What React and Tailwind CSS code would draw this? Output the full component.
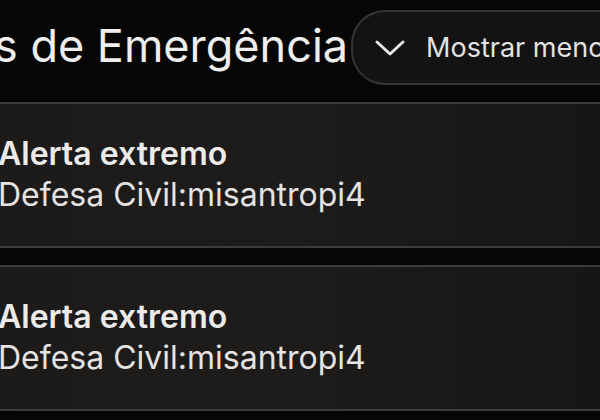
import React from 'react';

const AlertCard = ({ title, sender }) => {
  return (
    <div className="h-[146px] border-y-2 border-[#3e3c3b] bg-gradient-to-r from-[#1c1b1a] via-[#1e1c1b] to-[#171615] pt-[30px]">
      <p className="-ml-[2px] text-[32px] leading-[40px] font-semibold text-[#ecebea]">{title}</p>
      <p className="-ml-[2px] text-[32px] leading-[41px] text-[#e4e3e2]">{sender}</p>
    </div>
  );
};

const App = () => {
  const alerts = [
    { title: 'Alerta extremo', sender: 'Defesa Civil:misantropi4' },
    { title: 'Alerta extremo', sender: 'Defesa Civil:misantropi4' },
  ];

  return (
    <div className="w-[600px] h-[420px] overflow-hidden bg-[#060606] font-['Inter',sans-serif]">
      <div className="h-[102px] flex items-start whitespace-nowrap">
        <h1 className="-ml-[6px] mt-[18px] text-[45px] leading-[56px] text-[#eeeeee]">s de Emergência</h1>
        <button className="ml-[3px] mt-[10px] h-[75px] shrink-0 flex items-center pl-[21px] pr-6 rounded-l-[34px] border-2 border-r-0 border-[#353535] bg-[#131313] text-[#e2e2e2]">
          <svg width="32" height="20" viewBox="0 0 32 20" fill="none">
            <path d="M3 4 L16 16 L29 4" stroke="#e6e6e6" strokeWidth="3" strokeLinecap="round" strokeLinejoin="round" />
          </svg>
          <span className="ml-[20px] text-[27px] leading-[34px]">Mostrar menos</span>
        </button>
      </div>
      <div className="flex flex-col gap-[17px]">
        {alerts.map((alert, index) => (
          <AlertCard key={index} title={alert.title} sender={alert.sender} />
        ))}
      </div>
    </div>
  );
};

export default App;
